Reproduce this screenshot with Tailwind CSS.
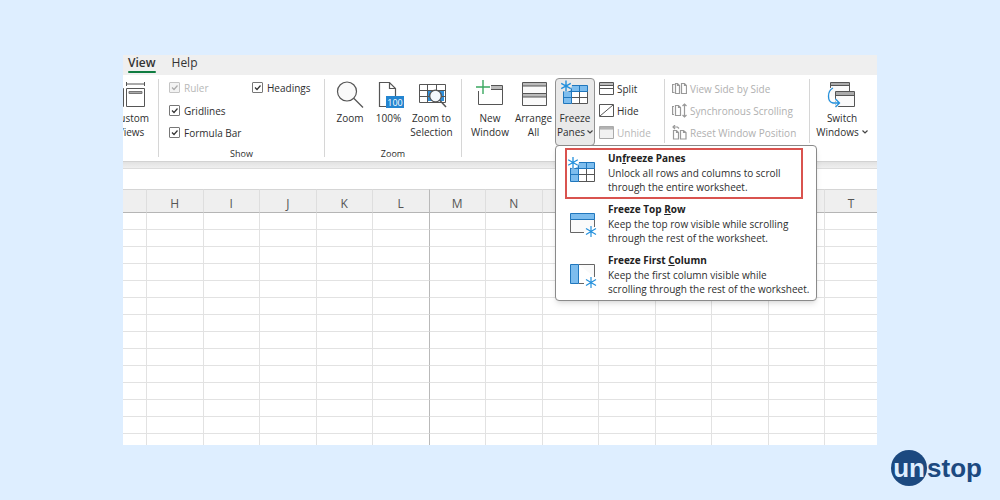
<!DOCTYPE html>
<html lang="en">
<head>
<meta charset="utf-8">
<meta name="viewport" content="width=device-width, initial-scale=1">
<title>Freeze Panes</title>
<script src="https://cdn.jsdelivr.net/npm/@tailwindcss/browser@4"></script>
</head>
<body class="flex min-h-screen flex-col overflow-x-hidden bg-[#deeeff] font-['Open_Sans','Noto_Sans',sans-serif] text-[10px] leading-[14px] text-[#2e2e2e]">
<main class="mx-[123px] mt-[55px] bg-white">

  <nav class="flex h-5 items-start gap-4 bg-[#efefef] pl-[5px] text-[12px] leading-4 text-[#333]">
    <a href="#view" class="flex flex-col font-semibold">View<span class="h-[2px] rounded bg-[#107c41]"></span></a>
    <a href="#help">Help</a>
  </nav>

  <section class="flex h-[87px] border-b border-[#d2d2d2] pt-[3px]" aria-label="Ribbon">
    <div class="flex w-[35px] shrink-0 justify-end overflow-hidden pr-[5px]">
      <button class="flex w-11 shrink-0 flex-col items-center">
        <svg class="mt-[2px] mb-px h-[30px] w-[30px]" viewBox="0 0 30 30" fill="none" stroke="#555"><path d="M10.500 2v4M28.500 2v4M10.500 4h18M10.500 8.500h18v18h-18zM4 8.500h3.500M4 26.500h3.500M7.500 8.500v18"/><path d="M13 11.500h13v2H13z" fill="#aaa" stroke="#777"/></svg>
        <span>Custom</span><span>Views</span>
      </button>
    </div>
    <div class="mt-px h-[78px] w-px shrink-0 bg-[#d6d6d6]"></div>

    <fieldset class="flex w-[165px] shrink-0 flex-col pl-[10px]">
      <div class="grid grid-cols-[83px_1fr] pt-[3px]">
        <label class="flex h-[23px] items-start gap-1 text-[#b8b8b8]"><span class="mt-px grid"><input type="checkbox" checked disabled class="col-start-1 row-start-1 size-[11px] appearance-none rounded-[1px] border border-[#c4c4c4] bg-[#f3f3f3]"><svg class="pointer-events-none col-start-1 row-start-1 size-[11px]" viewBox="0 0 11 11" fill="none" stroke="#aaa" stroke-width="1.200"><path d="M3 5.500l2 2 3.500-4"/></svg></span>Ruler</label>
        <label class="flex h-[23px] items-start gap-1"><span class="mt-px grid"><input type="checkbox" checked class="col-start-1 row-start-1 size-[11px] appearance-none rounded-[1px] border border-[#777] bg-white"><svg class="pointer-events-none col-start-1 row-start-1 size-[11px]" viewBox="0 0 11 11" fill="none" stroke="#333" stroke-width="1.200"><path d="M3 5.500l2 2 3.500-4"/></svg></span>Headings</label>
        <label class="col-span-2 flex h-[22px] items-start gap-1"><span class="mt-px grid"><input type="checkbox" checked class="col-start-1 row-start-1 size-[11px] appearance-none rounded-[1px] border border-[#777] bg-white"><svg class="pointer-events-none col-start-1 row-start-1 size-[11px]" viewBox="0 0 11 11" fill="none" stroke="#333" stroke-width="1.200"><path d="M3 5.500l2 2 3.500-4"/></svg></span>Gridlines</label>
        <label class="col-span-2 flex h-[22px] items-start gap-1"><span class="mt-px grid"><input type="checkbox" checked class="col-start-1 row-start-1 size-[11px] appearance-none rounded-[1px] border border-[#777] bg-white"><svg class="pointer-events-none col-start-1 row-start-1 size-[11px]" viewBox="0 0 11 11" fill="none" stroke="#333" stroke-width="1.200"><path d="M3 5.500l2 2 3.500-4"/></svg></span>Formula Bar</label>
      </div>
      <div class="pr-[10px] text-center text-[9px] leading-3">Show</div>
    </fieldset>
    <div class="mt-px h-[78px] w-px shrink-0 bg-[#d6d6d6]"></div>

    <div class="flex w-[136px] shrink-0 flex-col">
      <div class="flex h-[70px] pl-[7px]">
        <button class="flex w-[36px] shrink-0 flex-col items-center">
          <svg class="mt-[2px] mb-px h-[30px] w-[30px]" viewBox="0 0 30 30" fill="none" stroke="#555" stroke-width="1.200"><circle cx="12" cy="11.500" r="9.500" fill="#fafafa"/><path d="M19 18.500l9 9"/></svg>
          <span>Zoom</span>
        </button>
        <button class="flex w-[41px] shrink-0 flex-col items-center">
          <svg class="mt-[2px] mb-px h-[30px] w-[30px]" viewBox="0 0 30 30" fill="none" stroke="#555" stroke-width="1.200"><path d="M5.500 2.500h10l6 6v18h-16zM15.500 2.500v6h6"/><rect x="12" y="16" width="18" height="12" fill="#2485d0" stroke="none"/><text x="21" y="26" text-anchor="middle" fill="#fff" stroke="none" font-size="9" font-family="Open Sans">100</text></svg>
          <span>100%</span>
        </button>
        <button class="flex w-[45px] shrink-0 flex-col items-center">
          <svg class="mt-[2px] mb-px h-[30px] w-[30px]" viewBox="0 0 30 30" fill="none" stroke="#555"><path d="M11 11h16v10H11z" fill="#2f90dc" stroke="none"/><path d="M2.500 4.500h26v18h-26zM2.500 10.500h26M2.500 16.500h26M10.500 4.500v18M19.500 4.500v6"/><circle cx="18.500" cy="16" r="5.800" fill="#f4f8fc" stroke-width="1.300"/><path d="M23 20.500l6 6.500" stroke-width="1.500"/></svg>
          <span class="whitespace-nowrap">Zoom to</span><span>Selection</span>
        </button>
      </div>
      <div class="text-center text-[9px] leading-3">Zoom</div>
    </div>
    <div class="mt-px h-[78px] w-px shrink-0 bg-[#d6d6d6]"></div>

    <button class="ml-[6px] flex w-[44px] shrink-0 flex-col items-center">
      <svg class="mt-[2px] mb-px h-[30px] w-[30px]" viewBox="0 0 30 30" fill="none" stroke="#555"><path d="M3.500 11v13.500h24v-19H16" /><path d="M16 6h11v3H16z" fill="#bbb" stroke="none"/><path d="M16 9.500h11"/><path d="M8 0v14M1 7h14" stroke="#3aa860" stroke-width="1.400"/></svg>
      <span>New</span><span>Window</span>
    </button>
    <button class="flex w-[43px] shrink-0 flex-col items-center">
      <svg class="mt-[2px] mb-px h-[30px] w-[30px]" viewBox="0 0 30 30" fill="none" stroke="#555"><path d="M3.500 2.500h24v11h-24zM3.500 13.500h24v12h-24z" fill="#fafafa"/><path d="M4 3h23v3H4zM4 14h23v3H4z" fill="#bbb" stroke="none"/><path d="M3.500 6h24M3.500 17h24"/></svg>
      <span>Arrange</span><span>All</span>
    </button>
    <div class="relative z-10 w-10 shrink-0">
      <button class="flex h-[68px] w-10 flex-col items-center rounded-[4px] border border-[#929292] bg-[#e9e9e9]" aria-expanded="true">
        <svg class="mt-px mb-px h-[30px] w-[30px]" viewBox="0 0 30 30" fill="none"><path d="M3.500 5.500h24v18h-24z" fill="#fff"/><path d="M3.500 5.500h24v6h-16v12h-8z" fill="#7dbdee"/><path d="M11.500 11.500h16v12h-16M11.500 17.500h16M19.500 11.500v12" stroke="#555"/><path d="M3.500 5.500h24v6h-24M11.500 5.500v18h-8v-18M19.500 5.500v6M3.500 17.500h8" stroke="#2077bd"/><circle cx="6" cy="6" r="6" fill="#e9e9e9"/><path d="M6 .5v11M1.200 3.300l9.600 5.400M10.800 3.300l-9.600 5.400" stroke="#2390dc" stroke-width="1.400"/></svg>
        <span>Freeze</span>
        <span class="flex items-center gap-[2px]">Panes<svg class="h-[6px] w-[6px]" viewBox="0 0 6 6" fill="none" stroke="#444" stroke-width="1.200"><path d="M.5 1.500L3 4l2.500-2.500"/></svg></span>
      </button>
      <div role="menu" class="absolute top-[67px] left-0 h-[156px] w-[262px] rounded-[4px] border border-[#8a8a8a] bg-white pt-[2px] pl-[9px] text-left shadow-md">
        <button role="menuitem" class="flex h-[51px] w-[238px] gap-[11px] border-2 border-[#d9534f] text-left">
          <svg class="mt-[6px] h-[30px] w-[30px] shrink-0" viewBox="0 0 30 30" fill="none"><path d="M3.500 6.500h24v19h-24z" fill="#fff"/><path d="M3.500 6.500h24v6h-16v13h-8z" fill="#7dbdee"/><path d="M11.500 12.500h16v13h-16M11.500 18.500h16M19.500 12.500v13" stroke="#555"/><path d="M3.500 6.500h24v6h-24M11.500 6.500v19h-8v-19M19.500 6.500v6M3.500 18.500h8" stroke="#2077bd"/><circle cx="6" cy="6.500" r="6" fill="#fff"/><path d="M6 1v11M1.200 3.800l9.600 5.400M10.800 3.800l-9.600 5.400" stroke="#2390dc" stroke-width="1.300"/></svg>
          <span class="flex flex-col whitespace-nowrap"><b class="leading-4 font-bold text-[#222]">Un<u>f</u>reeze Panes</b><span>Unlock all rows and columns to scroll</span><span>through the entire worksheet.</span></span>
        </button>
        <button role="menuitem" class="mt-[2px] flex h-[51px] w-[250px] gap-[11px] pl-[2px] text-left">
          <svg class="mt-[5px] h-[31px] w-[30px] shrink-0" viewBox="0 0 30 31" fill="none"><path d="M17 26.500H3.500v-13h24V21" fill="#fafafa" stroke="#666"/><path d="M3.500 7.500h24v6h-24z" fill="#7dbdee" stroke="#2077bd"/><path d="M24 20v11M19 22.500l10 6M29 22.500l-10 6" stroke="#2390dc" stroke-width="1.200"/></svg>
          <span class="flex flex-col whitespace-nowrap"><b class="leading-4 font-bold text-[#222]">Freeze Top <u>R</u>ow</b><span>Keep the top row visible while scrolling</span><span>through the rest of the worksheet.</span></span>
        </button>
        <button role="menuitem" class="flex h-[48px] w-[250px] gap-[11px] pl-[2px] text-left">
          <svg class="mt-[5px] h-[31px] w-[30px] shrink-0" viewBox="0 0 30 31" fill="none"><path d="M11.500 7.500h16V20M17 26.500h-5.500" fill="#fafafa" stroke="#666"/><path d="M3.500 7.500h8v19h-8z" fill="#7dbdee" stroke="#2077bd"/><path d="M24 20v11M19 22.500l10 6M29 22.500l-10 6" stroke="#2390dc" stroke-width="1.200"/></svg>
          <span class="flex flex-col whitespace-nowrap"><b class="leading-4 font-bold text-[#222]">Freeze First <u>C</u>olumn</b><span>Keep the first column visible while</span><span>scrolling through the rest of the worksheet.</span></span>
        </button>
      </div>
    </div>

    <div class="flex w-[69px] shrink-0 flex-col gap-[7px] pt-[3px] pl-1">
      <button class="flex items-center gap-[3px]"><svg class="size-[15px]" viewBox="0 0 15 15" fill="none" stroke="#555"><path d="M.5 1.500h14v12H.5z"/><path d="M1 2h13v2H1z" fill="#bbb" stroke="none"/><path d="M.5 4.500h14M.5 7.500h14"/></svg>Split</button>
      <button class="flex items-center gap-[3px]"><svg class="size-[15px]" viewBox="0 0 15 15" fill="none" stroke="#555"><path d="M.5 1.500h14v12H.5zM1 13L14 2"/></svg>Hide</button>
      <button disabled class="flex items-center gap-[3px] text-[#b8b8b8]"><svg class="size-[15px]" viewBox="0 0 15 15" fill="none" stroke="#aaa"><path d="M.5 1.500h14v12H.5z" fill="#f1f1f1"/><path d="M1 2h13v2H1z" fill="#bbb"/></svg>Unhide</button>
    </div>
    <div class="mt-px h-[64px] w-px shrink-0 bg-[#d6d6d6]"></div>

    <div class="flex w-[144px] shrink-0 flex-col gap-[7px] pt-[3px] pl-[7px] whitespace-nowrap text-[#b0b0b0]">
      <button disabled class="flex items-center gap-[3px]"><svg class="size-[15px]" viewBox="0 0 15 15" fill="none" stroke="#999" stroke-width="1.200"><path d="M2.500 11.500H.6v-8h2M3.500 2.500h2l2 2v8h-4zM9.500 2.500h3l2 2v8h-5zM5.500 2.500v2h2M12.500 2.500v2h2"/></svg>View Side by Side</button>
      <button disabled class="flex items-center gap-[3px]"><svg class="size-[15px]" viewBox="0 0 15 15" fill="none" stroke="#999" stroke-width="1.200"><path d="M2 11.500H.6v-8H2M3.500 2.500h3l2 2v8h-5zM6.500 2.500v2h2M12.500 1v13M10.500 3l2-2 2 2M10.500 12l2 2 2-2"/></svg>Synchronous Scrolling</button>
      <button disabled class="flex items-center gap-[3px]"><svg class="size-[15px]" viewBox="0 0 15 15" fill="none" stroke="#999" stroke-width="1.200"><path d="M1.500 5.500h3l2 2v6.500h-5zM8.500 5.500h3l2.500 2v6.500H8.500zM4.500 5.500v2h2M11.500 5.500v2H14M3 0L1 2l2 2M1 2h4.500l1.500 1.500"/></svg>Reset Window Position</button>
    </div>
    <div class="mt-px h-[64px] w-px shrink-0 bg-[#d6d6d6]"></div>

    <button class="ml-[4px] flex w-[56px] shrink-0 flex-col items-center">
      <svg class="mt-[2px] mb-px h-[30px] w-[30px]" viewBox="0 0 30 30" fill="none" stroke="#555"><path d="M3.500 2.500h19v14h-19z" fill="#fafafa" stroke="none"/><path d="M3.500 8V2.500h19v9M3.500 5.500h19"/><path d="M4 3h18v2H4z" fill="#aaa" stroke="none"/><path d="M8.500 11.500h19v15h-19z" fill="#fafafa"/><path d="M9 12h18v3H9z" fill="#aaa" stroke="none"/><path d="M8.500 15.500h19"/><path d="M6 8C0 11 0 22 6 23h6M8.500 19l4 4-4 4" stroke="#fafafa" stroke-width="3"/><path d="M6 8C0 11 0 22 6 23h6M8.500 19l4 4-4 4" stroke="#2390dc" stroke-width="1.300"/></svg>
      <span>Switch</span>
      <span class="flex items-center gap-[3px]">Windows<svg class="h-[6px] w-[6px]" viewBox="0 0 6 6" fill="none" stroke="#444" stroke-width="1.200"><path d="M.5 1.500L3 4l2.500-2.500"/></svg></span>
    </button>
  </section>

  <div class="h-[7px] border-b border-[#dcdcdc] bg-linear-to-b from-[#e2e2e2] to-[#efefef]"></div>
  <input type="text" aria-label="Formula bar" class="block h-5 w-full bg-white outline-none">

  <table class="w-full table-fixed border-separate border-spacing-0 text-[12px] leading-4 [&_td]:h-[17px] [&_td]:border-r [&_td]:border-b [&_td]:border-[#e2e2e2] [&_td:last-child]:border-r-0 [&_td:nth-child(6)]:border-r-[#b9b9b9] [&_th]:h-[24px] [&_th]:border-t [&_th]:border-r [&_th]:border-b [&_th]:border-t-[#d5d5d5] [&_th]:border-r-[#dedede] [&_th]:border-b-[#b5b5b5] [&_th]:bg-[#efefef] [&_th]:p-0 [&_th]:pt-[5px] [&_th]:font-normal [&_th]:text-[#555] [&_th:last-child]:border-r-0 [&_th:nth-child(6)]:border-r-[#b9b9b9]">
    <colgroup><col class="w-6"><col><col><col><col><col><col><col><col><col><col><col><col><col class="w-[52px]"></colgroup>
    <thead><tr><th></th><th>H</th><th>I</th><th>J</th><th>K</th><th>L</th><th>M</th><th>N</th><th></th><th></th><th></th><th></th><th></th><th>T</th></tr></thead>
    <tbody id="cells"></tbody>
  </table>
</main>

<footer class="flex justify-end pt-[5px] pr-[18px]">
  <a href="#unstop" class="flex items-center font-['Liberation_Sans',sans-serif] text-[26px] leading-9 font-bold text-[#1c4980]"><span class="flex size-9 items-center justify-center rounded-full bg-[#1c4980] text-[#deeeff]">un</span>stop</a>
</footer>

<script>
  const body = document.getElementById('cells');
  for (let r = 0; r < 14; r++) {
    const row = body.insertRow();
    for (let c = 0; c < 14; c++) {
      const cell = row.insertCell();
      if (r === 13) { cell.style.height = '11px'; cell.style.borderBottom = '0'; }
    }
  }
</script>
</body>
</html>
